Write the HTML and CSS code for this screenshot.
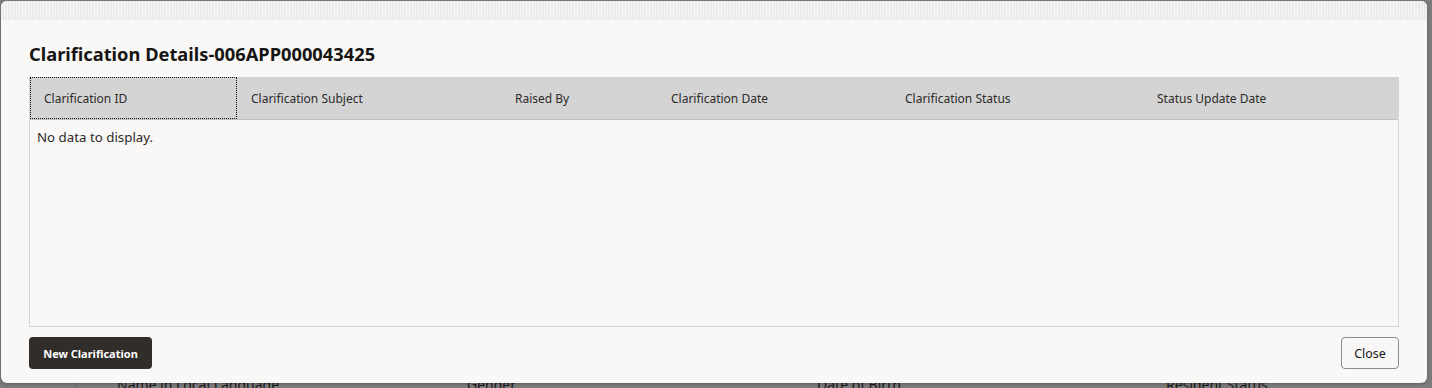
FILE: index.html
```html
<!DOCTYPE html>
<html lang="en">
<head>
    <meta charset="UTF-8">
    <title>Clarification Details</title>
    <link rel="stylesheet" href="styles.css">
</head>
<body>
    <!-- trang phía sau dialog -->
    <div class="page-behind">
        <div class="field-row">
            <span class="field-icon"></span>
            <span class="field f1">Name in Local Language</span>
            <span class="field f2">Gender</span>
            <span class="field f3">Date of Birth</span>
            <span class="field f4">Resident Status</span>
        </div>
    </div>

    <div class="dialog">
        <div class="dialog-strip"></div>
        <div class="dialog-body">
            <h2 class="dialog-title">Clarification Details-006APP000043425</h2>

            <div class="table">
                <div class="table-head">
                    <div class="th c1 focused">Clarification ID</div>
                    <div class="th c2">Clarification Subject</div>
                    <div class="th c3">Raised By</div>
                    <div class="th c4">Clarification Date</div>
                    <div class="th c5">Clarification Status</div>
                    <div class="th c6">Status Update Date</div>
                </div>
                <div class="table-body">
                    <div class="empty">No data to display.</div>
                </div>
            </div>

            <div class="dialog-footer">
                <button class="btn btn-primary">New Clarification</button>
                <button class="btn btn-outline">Close</button>
            </div>
        </div>
    </div>
</body>
</html>
```

FILE: styles.css
```css
body {
    margin: 0;
    padding: 0;
    width: 1432px;
    height: 388px;
    overflow: hidden;
    background-color: #7b7b7b;
    font-family: 'Noto Sans', 'Open Sans', sans-serif;
    color: #161513;
    position: relative;
}
.page-behind {
    padding-top: 375px;
}
.field-row {
    display: flex;
    align-items: flex-start;
    font-size: 14px;
    color: #1a1816;
}
.field-icon {
    width: 26px;
    height: 26px;
    margin-left: 75px;
    border-left: 1px solid #666;
}
.field { display: block; }
.f1 { margin-left: 15px; width: 350px; }
.f2 { width: 350px; }
.f3 { width: 349px; }
.f4 { }

/* dialog */
.dialog {
    position: absolute;
    left: 1px;
    top: 1px;
    width: 1426px;
    height: 382px;
    background-color: #f9f8f6;
    border-radius: 6px;
    overflow: hidden;
    box-shadow: 0 1px 3px rgba(0, 0, 0, 0.25);
}
.dialog-strip {
    height: 19px;
    background-color: #efeeec;
    background-image:
        repeating-linear-gradient(90deg, rgba(255, 255, 255, 0.55) 0 1px, transparent 1px 3px),
        repeating-linear-gradient(0deg, rgba(0, 0, 0, 0.025) 0 1px, transparent 1px 2px);
}
.dialog-body {
    padding: 0 28px 0 28px;
}
.dialog-title {
    margin: 21px 0 0 0;
    font-size: 18.3px;
    font-weight: bold;
    line-height: 26px;
    color: #161513;
}
.table {
    margin-top: 10px;
    border: 1px solid #d6d5d3;
    border-top: none;
    height: 249px;
    display: flex;
    flex-direction: column;
}
.table-head {
    display: flex;
    height: 42px;
    background-color: #d4d4d4;
    border-bottom: 1px solid #c2c1bf;
    font-size: 12px;
    color: #2d2b29;
}
.th {
    display: flex;
    align-items: center;
    padding-left: 14px;
    box-sizing: border-box;
}
.c1 { width: 207px; }
.c2 { width: 264px; }
.c3 { width: 156px; }
.c4 { width: 234px; }
.c5 { width: 252px; }
.c6 { flex: 1; }
.focused {
    outline: 1px dotted #111;
    outline-offset: -1px;
}
.table-body {
    flex: 1;
}
.empty {
    padding: 8px 0 0 7px;
    font-size: 13.3px;
    color: #2d2b29;
}
.dialog-footer {
    display: flex;
    justify-content: space-between;
    margin-top: 10px;
}
.btn {
    height: 32px;
    border-radius: 4px;
    font-family: 'Noto Sans', 'Open Sans', sans-serif;
    font-size: 12px;
    cursor: pointer;
}
.btn-primary {
    width: 123px;
    background-color: #312d2a;
    color: #fff;
    border: none;
    font-weight: bold;
    font-size: 11px;
}
.btn-outline {
    width: 58px;
    background-color: transparent;
    color: #161513;
    border: 1px solid #8e8c8a;
    font-size: 12.5px;
}
```
